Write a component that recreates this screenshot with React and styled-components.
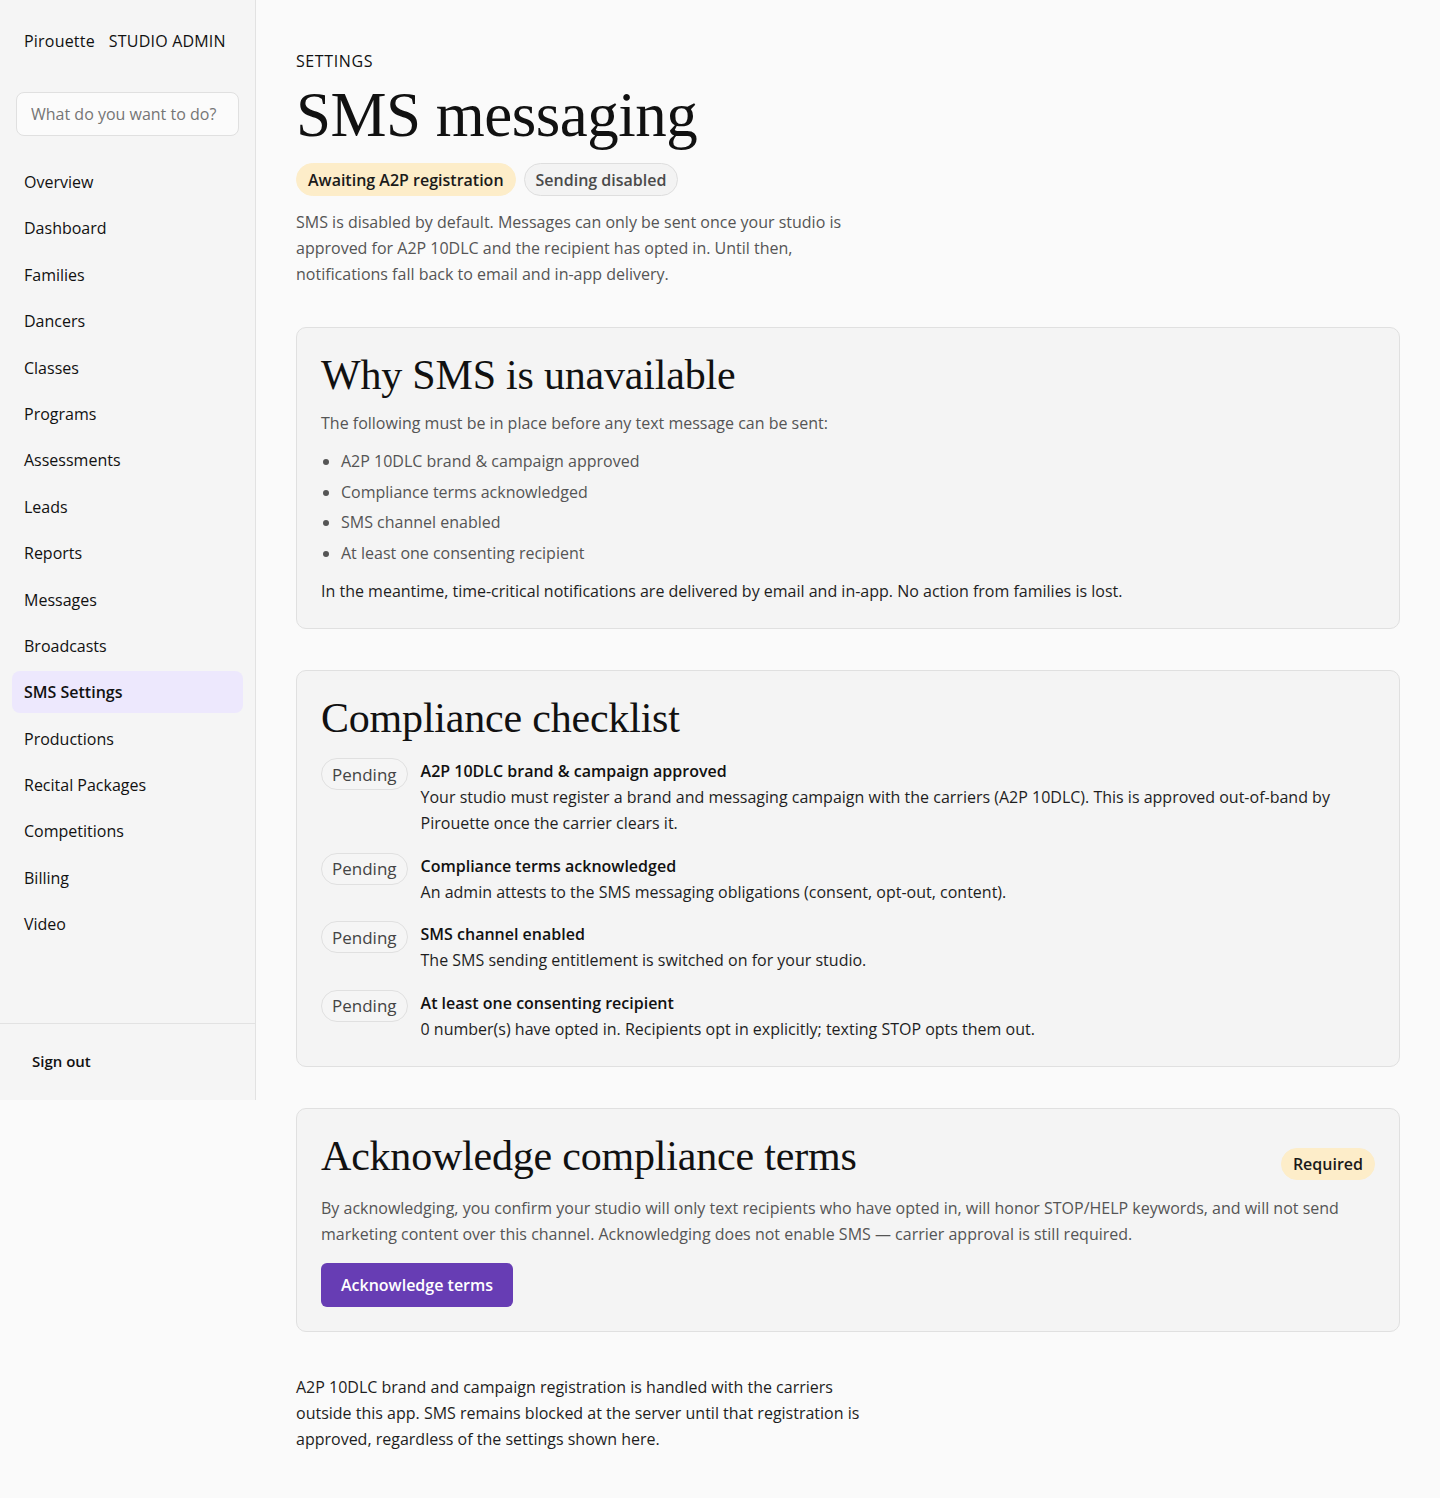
import React from 'react';
import styled, { createGlobalStyle } from 'styled-components';

const GlobalStyle = createGlobalStyle`
	* {
		box-sizing: border-box;
	}
	body {
		margin: 0;
		background: #fafafa;
		color: #1a1a1a;
		font-family: 'Open Sans', 'Noto Sans', sans-serif;
		font-size: 16px;
	}
`;

const Shell = styled.div`
	display: flex;
	align-items: flex-start;
	min-height: 1498px;
	background: #fafafa;
`;

const Sidebar = styled.aside`
	width: 256px;
	flex-shrink: 0;
	height: 1100px;
	background: #f5f5f5;
	border-right: 1px solid #e2e2e2;
	display: flex;
	flex-direction: column;
`;

const Brand = styled.div`
	display: flex;
	gap: 14px;
	padding: 30px 24px 0;
	font-size: 16px;
	color: #111;
	letter-spacing: 0.2px;
`;

const SearchBox = styled.input`
	margin: 40px 16px 25px;
	height: 44px;
	border: 1px solid #e0e0e0;
	border-radius: 8px;
	background: #fbfbfb;
	padding: 0 14px;
	font-family: inherit;
	font-size: 16px;
	outline: none;
	::placeholder {
		color: #7a7a7a;
	}
`;

const Nav = styled.nav`
	display: flex;
	flex-direction: column;
	gap: 4.4px;
	padding: 0 12px;
	flex: 1;
`;

const NavItem = styled.a`
	display: block;
	height: 42px;
	line-height: 42px;
	padding: 0 12px;
	border-radius: 8px;
	font-size: 16px;
	color: #111;
	text-decoration: none;
	font-weight: ${(props) => (props.$active ? 600 : 400)};
	background: ${(props) => (props.$active ? '#ede8fd' : 'transparent')};
`;

const SidebarFooter = styled.div`
	border-top: 1px solid #e2e2e2;
	height: 77px;
	padding: 27px 32px 0;
	font-size: 15px;
	font-weight: 600;
	color: #111;
`;

const Main = styled.main`
	flex: 1;
	padding: 50px 40px 40px;
`;

const Eyebrow = styled.div`
	font-size: 16px;
	letter-spacing: 0.6px;
	color: #111;
`;

const PageTitle = styled.h1`
	font-family: 'Liberation Serif', serif;
	font-weight: 400;
	font-size: 63px;
	line-height: 64px;
	margin: 11px 0 16px;
	color: #111;
	letter-spacing: -0.5px;
`;

const BadgeRow = styled.div`
	display: flex;
	gap: 8px;
	margin-bottom: 13px;
`;

const Badge = styled.span`
	display: inline-flex;
	align-items: center;
	height: 33px;
	padding: 0 11px;
	border-radius: 999px;
	font-size: 16px;
	font-weight: 600;
	color: ${(props) => (props.$tone === 'warn' ? '#1a1a1a' : '#4a4a4a')};
	background: ${(props) => (props.$tone === 'warn' ? '#fdedc9' : '#f3f3f3')};
	border: 1px solid ${(props) => (props.$tone === 'warn' ? '#fdedc9' : '#dedede')};
`;

const Lead = styled.p`
	max-width: 570px;
	margin: 0;
	font-size: 16px;
	line-height: 26px;
	color: ${(props) => (props.$dark ? '#1e1e1e' : '#555')};
`;

const Stack = styled.div`
	display: flex;
	flex-direction: column;
	gap: 41px;
	margin: 40px 0 42px;
`;

const Card = styled.section`
	background: #f4f4f4;
	border: 1px solid #e0e0e0;
	border-radius: 10px;
	padding: 24px;
`;

const CardHead = styled.div`
	display: flex;
	justify-content: space-between;
	align-items: center;
	margin-bottom: 4px;
`;

const CardTitle = styled.h2`
	font-family: 'Liberation Serif', serif;
	font-weight: 400;
	font-size: 42px;
	line-height: 46px;
	margin: 0 0 12px;
	color: #111;
	letter-spacing: -0.2px;
`;

const Muted = styled.p`
	margin: 0;
	font-size: 16px;
	line-height: 26px;
	color: #555;
`;

const Body = styled.p`
	margin: 0;
	font-size: 16px;
	line-height: 26px;
	color: #1e1e1e;
`;

const Bullets = styled.ul`
	margin: 10px 0;
	padding-left: 20px;
	color: #555;
	li {
		line-height: 30.5px;
		font-size: 16px;
	}
`;

const Checklist = styled.div`
	display: flex;
	flex-direction: column;
	gap: 16.5px;
	margin-top: 17px;
`;

const CheckRow = styled.div`
	display: flex;
	gap: 13px;
	align-items: flex-start;
`;

const StatusPill = styled.span`
	flex-shrink: 0;
	display: inline-flex;
	align-items: center;
	height: 32px;
	padding: 0 10px;
	border-radius: 999px;
	border: 1px solid #e0e0e0;
	background: #f5f5f5;
	color: #444;
	font-size: 17px;
	font-weight: 500;
`;

const CheckText = styled.div`
	display: flex;
	flex-direction: column;
`;

const CheckTitle = styled.div`
	font-size: 16px;
	font-weight: 600;
	line-height: 26px;
	color: #111;
`;

const RequiredBadge = styled(Badge)`
	height: 32px;
	margin-top: 4px;
`;

const PrimaryButton = styled.button`
	margin-top: 16px;
	height: 44px;
	padding: 0 20px;
	border: none;
	border-radius: 6px;
	background: #673db4;
	color: #fff;
	font-family: inherit;
	font-size: 16px;
	font-weight: 600;
	cursor: pointer;
`;

const navItems = [
	'Overview',
	'Dashboard',
	'Families',
	'Dancers',
	'Classes',
	'Programs',
	'Assessments',
	'Leads',
	'Reports',
	'Messages',
	'Broadcasts',
	'SMS Settings',
	'Productions',
	'Recital Packages',
	'Competitions',
	'Billing',
	'Video',
];

const requirements = [
	'A2P 10DLC brand & campaign approved',
	'Compliance terms acknowledged',
	'SMS channel enabled',
	'At least one consenting recipient',
];

const checks = [
	{
		title: 'A2P 10DLC brand & campaign approved',
		text: 'Your studio must register a brand and messaging campaign with the carriers (A2P 10DLC). This is approved out-of-band by Pirouette once the carrier clears it.',
	},
	{
		title: 'Compliance terms acknowledged',
		text: 'An admin attests to the SMS messaging obligations (consent, opt-out, content).',
	},
	{
		title: 'SMS channel enabled',
		text: 'The SMS sending entitlement is switched on for your studio.',
	},
	{
		title: 'At least one consenting recipient',
		text: '0 number(s) have opted in. Recipients opt in explicitly; texting STOP opts them out.',
	},
];

export default function App() {
	return (
		<>
			<GlobalStyle />
			<Shell>
				<Sidebar>
					<Brand>
						<span>Pirouette</span>
						<span>STUDIO ADMIN</span>
					</Brand>
					<SearchBox placeholder='What do you want to do?' />
					<Nav>
						{navItems.map((item) => (
							<NavItem key={item} $active={item === 'SMS Settings'}>
								{item}
							</NavItem>
						))}
					</Nav>
					<SidebarFooter>Sign out</SidebarFooter>
				</Sidebar>
				<Main>
					<Eyebrow>SETTINGS</Eyebrow>
					<PageTitle>SMS messaging</PageTitle>
					<BadgeRow>
						<Badge $tone='warn'>Awaiting A2P registration</Badge>
						<Badge>Sending disabled</Badge>
					</BadgeRow>
					<Lead>
						SMS is disabled by default. Messages can only be sent once your studio is
						approved for A2P 10DLC and the recipient has opted in. Until then,
						notifications fall back to email and in-app delivery.
					</Lead>

					<Stack>
						<Card>
							<CardTitle>Why SMS is unavailable</CardTitle>
							<Muted>The following must be in place before any text message can be sent:</Muted>
							<Bullets>
								{requirements.map((r) => (
									<li key={r}>{r}</li>
								))}
							</Bullets>
							<Body>
								In the meantime, time-critical notifications are delivered by email and
								in-app. No action from families is lost.
							</Body>
						</Card>

						<Card>
							<CardTitle>Compliance checklist</CardTitle>
							<Checklist>
								{checks.map((c) => (
									<CheckRow key={c.title}>
										<StatusPill>Pending</StatusPill>
										<CheckText>
											<CheckTitle>{c.title}</CheckTitle>
											<Body>{c.text}</Body>
										</CheckText>
									</CheckRow>
								))}
							</Checklist>
						</Card>

						<Card>
							<CardHead>
								<CardTitle>Acknowledge compliance terms</CardTitle>
								<RequiredBadge $tone='warn'>Required</RequiredBadge>
							</CardHead>
							<Muted>
								By acknowledging, you confirm your studio will only text recipients who have
								opted in, will honor STOP/HELP keywords, and will not send marketing content
								over this channel. Acknowledging does not enable SMS — carrier approval is
								still required.
							</Muted>
							<PrimaryButton>Acknowledge terms</PrimaryButton>
						</Card>
					</Stack>

					<Lead $dark>
						A2P 10DLC brand and campaign registration is handled with the carriers outside
						this app. SMS remains blocked at the server until that registration is
						approved, regardless of the settings shown here.
					</Lead>
				</Main>
			</Shell>
		</>
	);
}
